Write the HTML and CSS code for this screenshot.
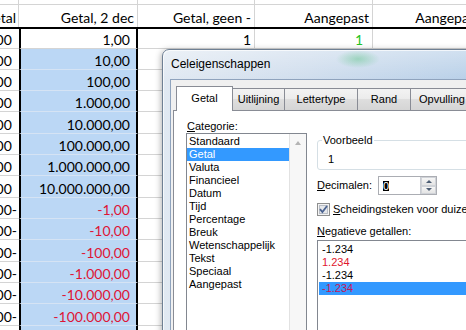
FILE: index.html
```html
<!DOCTYPE html>
<html lang="nl">
<head>
  <meta charset="UTF-8" />
  <title>Celeigenschappen</title>
  <link rel="stylesheet" href="styles.css">
</head>
<body>

  <div class="sheet">
    <div class="row row-top">
      <div class="cell c-a"></div><div class="cell c-b"></div><div class="cell c-c"></div><div class="cell c-d"></div><div class="cell c-e"></div>
    </div>
    <div class="row row-head">
      <div class="cell c-a">Getal</div>
      <div class="cell c-b">Getal, 2 dec</div>
      <div class="cell c-c">Getal, geen -</div>
      <div class="cell c-d">Aangepast</div>
      <div class="cell c-e">Aangepast</div>
    </div>
    <div class="row row-data row-first">
      <div class="cell c-a">1,00<span class="pad">-</span></div>
      <div class="cell c-b active">1,00</div>
      <div class="cell c-c">1</div>
      <div class="cell c-d green">1</div>
      <div class="cell c-e"></div>
    </div>
    <div class="row row-data"><div class="cell c-a">10,00<span class="pad">-</span></div><div class="cell c-b">10,00</div><div class="cell c-c"></div><div class="cell c-d"></div><div class="cell c-e"></div></div>
    <div class="row row-data"><div class="cell c-a">100,00<span class="pad">-</span></div><div class="cell c-b">100,00</div><div class="cell c-c"></div><div class="cell c-d"></div><div class="cell c-e"></div></div>
    <div class="row row-data"><div class="cell c-a">1.000,00<span class="pad">-</span></div><div class="cell c-b">1.000,00</div><div class="cell c-c"></div><div class="cell c-d"></div><div class="cell c-e"></div></div>
    <div class="row row-data"><div class="cell c-a">10.000,00<span class="pad">-</span></div><div class="cell c-b">10.000,00</div><div class="cell c-c"></div><div class="cell c-d"></div><div class="cell c-e"></div></div>
    <div class="row row-data"><div class="cell c-a">100.000,00<span class="pad">-</span></div><div class="cell c-b">100.000,00</div><div class="cell c-c"></div><div class="cell c-d"></div><div class="cell c-e"></div></div>
    <div class="row row-data"><div class="cell c-a">1.000.000,00<span class="pad">-</span></div><div class="cell c-b">1.000.000,00</div><div class="cell c-c"></div><div class="cell c-d"></div><div class="cell c-e"></div></div>
    <div class="row row-data"><div class="cell c-a">10.000.000,00<span class="pad">-</span></div><div class="cell c-b">10.000.000,00</div><div class="cell c-c"></div><div class="cell c-d"></div><div class="cell c-e"></div></div>
    <div class="row row-data"><div class="cell c-a">1,00-</div><div class="cell c-b neg">-1,00</div><div class="cell c-c"></div><div class="cell c-d"></div><div class="cell c-e"></div></div>
    <div class="row row-data"><div class="cell c-a">10,00-</div><div class="cell c-b neg">-10,00</div><div class="cell c-c"></div><div class="cell c-d"></div><div class="cell c-e"></div></div>
    <div class="row row-data"><div class="cell c-a">100,00-</div><div class="cell c-b neg">-100,00</div><div class="cell c-c"></div><div class="cell c-d"></div><div class="cell c-e"></div></div>
    <div class="row row-data"><div class="cell c-a">1.000,00-</div><div class="cell c-b neg">-1.000,00</div><div class="cell c-c"></div><div class="cell c-d"></div><div class="cell c-e"></div></div>
    <div class="row row-data"><div class="cell c-a">10.000,00-</div><div class="cell c-b neg">-10.000,00</div><div class="cell c-c"></div><div class="cell c-d"></div><div class="cell c-e"></div></div>
    <div class="row row-data"><div class="cell c-a">100.000,00-</div><div class="cell c-b neg">-100.000,00</div><div class="cell c-c"></div><div class="cell c-d"></div><div class="cell c-e"></div></div>
    <div class="row row-data"><div class="cell c-a">1.000.000,00-</div><div class="cell c-b neg">-1.000.000,00</div><div class="cell c-c"></div><div class="cell c-d"></div><div class="cell c-e"></div></div>
  </div>

  <!-- Format Cells dialog on top of the sheet -->
  <div class="dialog">
    <div class="titlebar">Celeigenschappen</div>
    <div class="client">
      <div class="tabs">
        <div class="tab tab-getal active">Getal</div>
        <div class="tab tab-uitlijning">Uitlijning</div>
        <div class="tab tab-lettertype">Lettertype</div>
        <div class="tab tab-rand">Rand</div>
        <div class="tab tab-opvulling">Opvulling</div>
      </div>
      <div class="panel">
        <div class="col-left">
          <div class="label"><u>C</u>ategorie:</div>
          <div class="listbox cat-list">
            <div class="items">
              <div class="item">Standaard</div>
              <div class="item selected">Getal</div>
              <div class="item">Valuta</div>
              <div class="item">Financieel</div>
              <div class="item">Datum</div>
              <div class="item">Tijd</div>
              <div class="item">Percentage</div>
              <div class="item">Breuk</div>
              <div class="item">Wetenschappelijk</div>
              <div class="item">Tekst</div>
              <div class="item">Speciaal</div>
              <div class="item">Aangepast</div>
            </div>
            <div class="scrollbar"><span class="arrow-up"></span></div>
          </div>
        </div>
        <div class="col-right">
          <fieldset class="group">
            <legend>Voorbeeld</legend>
            <div class="sample">1</div>
          </fieldset>
          <div class="dec-row">
            <span class="dec-label"><u>D</u>ecimalen:</span>
            <div class="spin">
              <div class="spin-field"><span class="sel">0</span></div>
              <div class="spin-btns">
                <div class="spin-btn"><span class="tri-up"></span></div>
                <div class="spin-btn"><span class="tri-down"></span></div>
              </div>
            </div>
          </div>
          <div class="check-row">
            <svg class="checkbox" width="13" height="13" viewBox="0 0 13 13">
              <rect x="0.5" y="0.5" width="12" height="12" fill="#f4f4f4" stroke="#8e8f8f"/>
              <rect x="2.5" y="2.5" width="8" height="8" fill="#e6e8eb" stroke="#b9bec6"/>
              <path d="M3 6.2 L5.4 9 L10 3" fill="none" stroke="#4b6391" stroke-width="1.8"/>
            </svg>
            <span><u>S</u>cheidingsteken voor duizendtallen</span>
          </div>
          <div class="label neg-label"><u>N</u>egatieve getallen:</div>
          <div class="listbox neg-list">
            <div class="items">
              <div class="item">-1.234</div>
              <div class="item red">1.234</div>
              <div class="item">-1.234</div>
              <div class="item selected red">-1.234</div>
            </div>
          </div>
        </div>
      </div>
    </div>
  </div>

</body>
</html>
```

FILE: styles.css
```css
* {
  box-sizing: border-box;
}
body {
  margin: 0;
  width: 466px;
  height: 330px;
  overflow: hidden;
  position: relative;
  background: #fff;
  font-family: Lato, "Liberation Sans", sans-serif;
}

/* spreadsheet */
.sheet {
  width: 484px;
}
.row {
  display: flex;
  height: 21.33px;
}
.row-top {
  height: 5px;
}
.row-head {
  height: 23.5px;
  border-bottom: 2px solid #000;
}
.row-first {
  height: 20px;
}
.cell {
  display: flex;
  justify-content: flex-end;
  align-items: flex-end;
  overflow: hidden;
  white-space: nowrap;
  border-right: 1px solid #d4d4d4;
  border-bottom: 1px solid #d4d4d4;
  padding: 0 3px 0 0;
  font-size: 14px;
  line-height: 16px;
  color: #000;
}
.row-head .cell {
  border-bottom: none;
  padding-bottom: 1px;
}
.c-a { width: 19px; padding-right: 2px; }
.c-b { width: 119px; }
.c-c { width: 117px; }
.c-d { width: 118px; }
.c-e { width: 111px; }

.row-data .c-a {
  border-right: none;
  padding-right: 2px;
}
.row-data .c-b {
  border-left: 2px solid #000;
  border-right: 2px solid #000;
  background: #bbd7f5;
  border-bottom-color: #d5e3f4;
  padding-right: 6px;
}
.row-data .c-b.active {
  background: #fff;
  border-bottom-color: #d4d4d4;
}
.row-data .c-d {
  padding-right: 9px;
}
.pad {
  visibility: hidden;
}
.neg {
  color: #de1535;
}
.green {
  color: #22c422;
}

/* dialog window */
.dialog {
  position: absolute;
  left: 162px;
  top: 49px;
  width: 420px;
  height: 320px;
  border: 1px solid #6f8094;
  border-radius: 7px 7px 0 0;
  background:
    radial-gradient(ellipse 22px 9px at 195px 9px, rgba(110, 200, 150, 0.55), rgba(110, 200, 150, 0) 100%),
    linear-gradient(180deg, rgba(255, 255, 255, 0.35), rgba(255, 255, 255, 0) 30px),
    linear-gradient(90deg, #e1e9f2 0, #cfdded 35%, #b7cfe8 75%, #a9c6e4 100%);
  box-shadow: -1px 1px 6px rgba(0, 0, 0, 0.3), inset 1px 1px 0 rgba(255, 255, 255, 0.7);
  display: flex;
  flex-direction: column;
  font-family: "Liberation Sans", Arial, sans-serif;
  font-size: 11px;
  color: #000;
}
.titlebar {
  height: 29px;
  padding-left: 8px;
  font-size: 12px;
  line-height: 28px;
}
.client {
  flex: 1;
  margin-left: 7px;
  border-left: 1px solid #8fa3bd;
  border-top: 1px solid #8fa3bd;
  background: #f0f0f0;
  padding: 6px 0 0 2px;
  display: flex;
  flex-direction: column;
}

/* tabs */
.tabs {
  display: flex;
  align-items: flex-end;
  height: 24px;
  padding-left: 3px;
}
.tab {
  height: 22px;
  margin-left: -1px;
  border: 1px solid #898c95;
  border-bottom: none;
  background: linear-gradient(#f3f3f3, #ebebeb 50%, #dedede 50%, #d5d5d5);
  text-align: center;
  line-height: 20px;
  flex: none;
}
.tab.active {
  height: 25px;
  margin-bottom: -1px;
  background: #fff;
  position: relative;
  z-index: 1;
  line-height: 22px;
}
.tab-getal { width: 57px; margin-left: 0; }
.tab-uitlijning { width: 53px; }
.tab-lettertype { width: 74px; }
.tab-rand { width: 54px; }
.tab-opvulling { width: 64px; }

.panel {
  flex: 1;
  background: #fff;
  border: 1px solid #898c95;
  display: grid;
  grid-template-columns: 120px 1fr;
  column-gap: 10px;
  padding: 9px 0 0 13px;
  line-height: 13px;
}
.label {
  height: 13px;
}

/* list boxes */
.listbox {
  border: 1px solid #828790;
  background: #fff;
}
.cat-list {
  display: flex;
  height: 220px;
  margin-left: -1px;
}
.cat-list .items {
  flex: 1;
  padding-top: 1px;
}
.item {
  height: 13px;
  padding-left: 2px;
  white-space: nowrap;
}
.item.selected {
  background: #3399ff;
  color: #fff;
}
.scrollbar {
  width: 17px;
  border-left: 1px solid #e2e2e2;
  background: #f7f7f7;
  display: flex;
  justify-content: center;
  padding-top: 7px;
}
.arrow-up {
  width: 0;
  height: 0;
  border-left: 3.5px solid transparent;
  border-right: 3.5px solid transparent;
  border-bottom: 4px solid #b4b4b4;
}

/* right column */
.col-right {
  display: flex;
  flex-direction: column;
}
.group {
  margin: 14px 0 0;
  border: 1px solid #d5dfe5;
  border-radius: 3px;
  padding: 6px 0 3px 10px;
  min-width: 0;
}
.group legend {
  margin-left: -6px;
  padding: 0 1px;
  line-height: 13px;
}
.sample {
  height: 13px;
}
.dec-row {
  display: flex;
  align-items: center;
  margin-top: 6px;
  height: 19px;
}
.dec-label {
  width: 61px;
}
.spin {
  display: flex;
  width: 59px;
  height: 19px;
  border: 1px solid #abadb3;
  background: #fff;
}
.spin-field {
  flex: 1;
  padding: 3px 0 0 4px;
}
.sel {
  display: inline-block;
  background: #000;
  color: #fff;
  height: 10px;
  line-height: 10px;
  width: 6px;
}
.spin-btns {
  width: 16px;
  display: flex;
  flex-direction: column;
  border-left: 1px solid #c9ccd2;
}
.spin-btn {
  flex: 1;
  display: flex;
  align-items: center;
  justify-content: center;
  background: linear-gradient(#f6f6f6, #e4e4e4);
  border: 1px solid #d0d3d8;
}
.tri-up,
.tri-down {
  width: 0;
  height: 0;
  border-left: 3px solid transparent;
  border-right: 3px solid transparent;
}
.tri-up {
  border-bottom: 3px solid #4d5e75;
}
.tri-down {
  border-top: 3px solid #4d5e75;
}
.check-row {
  display: flex;
  align-items: center;
  gap: 3px;
  margin-top: 8px;
  height: 13px;
  white-space: nowrap;
}
.checkbox {
  flex: none;
}
.neg-label {
  margin-top: 9px;
}
.neg-list {
  margin-top: 2px;
  height: 120px;
  padding: 2px 0 0 1px;
}
.neg-list .item {
  padding-left: 3px;
}
.item.red {
  color: #e0162e;
}
.item.selected.red {
  color: #c2185b;
}
```
